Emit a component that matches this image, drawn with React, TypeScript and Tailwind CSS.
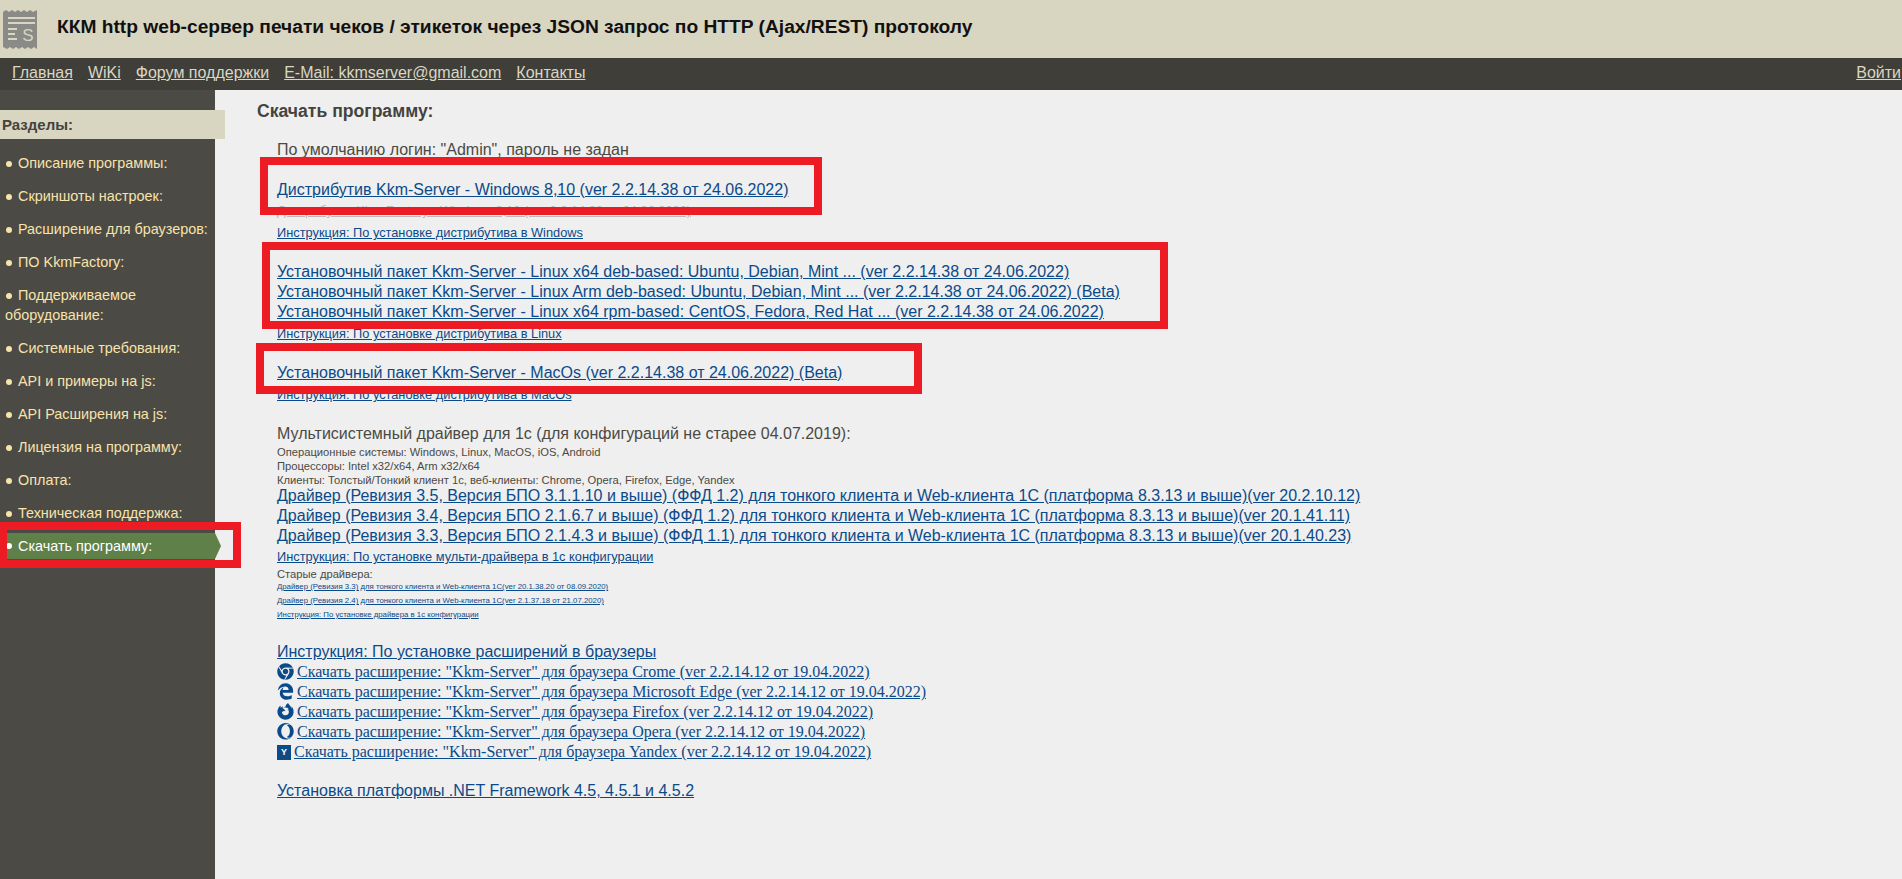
import { FaChrome, FaEdgeLegacy, FaFirefoxBrowser, FaOpera } from "react-icons/fa";

const menu = [
  "Описание программы:",
  "Скриншоты настроек:",
  "Расширение для браузеров:",
  "ПО KkmFactory:",
  "Поддерживаемое оборудование:",
  "Системные требования:",
  "API и примеры на js:",
  "API Расширения на js:",
  "Лицензия на программу:",
  "Оплата:",
  "Техническая поддержка:",
];

const navLinks = [
  "Главная",
  "WiKi",
  "Форум поддержки",
  "E-Mail: kkmserver@gmail.com",
  "Контакты",
];

const linuxLinks = [
  "Установочный пакет Kkm-Server - Linux x64 deb-based: Ubuntu, Debian, Mint ... (ver 2.2.14.38 от 24.06.2022)",
  "Установочный пакет Kkm-Server - Linux Arm deb-based: Ubuntu, Debian, Mint ... (ver 2.2.14.38 от 24.06.2022) (Beta)",
  "Установочный пакет Kkm-Server - Linux x64 rpm-based: CentOS, Fedora, Red Hat ... (ver 2.2.14.38 от 24.06.2022)",
];

const driverLinks = [
  "Драйвер (Ревизия 3.5, Версия БПО 3.1.1.10 и выше) (ФФД 1.2) для тонкого клиента и Web-клиента 1С (платформа 8.3.13 и выше)(ver 20.2.10.12)",
  "Драйвер (Ревизия 3.4, Версия БПО 2.1.6.7 и выше) (ФФД 1.2) для тонкого клиента и Web-клиента 1С (платформа 8.3.13 и выше)(ver 20.1.41.11)",
  "Драйвер (Ревизия 3.3, Версия БПО 2.1.4.3 и выше) (ФФД 1.1) для тонкого клиента и Web-клиента 1С (платформа 8.3.13 и выше)(ver 20.1.40.23)",
];

const oldDrivers = [
  "Драйвер (Ревизия 3.3) для тонкого клиента и Web-клиента 1С(ver 20.1.38.20 от 08.09.2020)",
  "Драйвер (Ревизия 2.4) для тонкого клиента и Web-клиента 1С(ver 2.1.37.18 от 21.07.2020)",
  "Инструкция: По установке драйвера в 1с конфигурации",
];

const YandexIcon = () => (
  <span className="inline-block overflow-hidden w-[14px] h-[15px] mr-[3px] align-[-3px] text-center leading-[15px] bg-[#0d4a86] text-white text-[9px] font-bold font-['Liberation_Sans',sans-serif]">
    Y
  </span>
);

const extensions = [
  { label: "Crome", icon: <FaChrome className="inline w-[17px] h-[17px] mr-[3px] align-[-3px]" /> },
  { label: "Microsoft Edge", icon: <FaEdgeLegacy className="inline w-[17px] h-[17px] mr-[3px] align-[-3px]" /> },
  { label: "Firefox", icon: <FaFirefoxBrowser className="inline w-[17px] h-[17px] mr-[3px] align-[-3px]" /> },
  { label: "Opera", icon: <FaOpera className="inline w-[17px] h-[17px] mr-[3px] align-[-3px]" /> },
  { label: "Yandex", icon: <YandexIcon /> },
];

const linkClass = "text-[#0b4a8a] underline";

const ReceiptIcon = () => (
  <svg width="34" height="39" viewBox="0 0 34 39" className="shrink-0">
    <path
      d="M0 2 L3 0 L6 2 L9 0 L12 2 L15 0 L18 2 L21 0 L24 2 L27 0 L30 2 L34 0 L34 39 L31 37 L28 39 L25 37 L22 39 L19 37 L16 39 L13 37 L10 39 L7 37 L4 39 L0 37 Z"
      fill="#8a8a86"
    />
    <path
      d="M5 8 H32 M5 13 H32 M5 19 H14 M5 24 H12 M5 29 H14"
      stroke="#d8d5c1"
      strokeWidth="2"
      fill="none"
    />
    <text
      x="25"
      y="31"
      fontSize="17"
      fontFamily="Liberation Sans, sans-serif"
      fill="#d8d5c1"
      textAnchor="middle"
    >
      S
    </text>
  </svg>
);

function Bullet({ active }: { active?: boolean }) {
  return (
    <span
      className={
        active
          ? "inline-block w-[6px] h-[6px] rounded-full bg-white ml-[1px] mr-[6px] align-[1px]"
          : "inline-block w-[6px] h-[6px] rounded-full bg-[#f7e3ac] ml-[1px] mr-[6px] align-[1px]"
      }
    />
  );
}

function RedBox({ className }: { className: string }) {
  return <div className={`absolute border-8 border-[#ed1c24] ${className}`} />;
}

export default function App() {
  return (
    <div className="relative h-screen overflow-hidden flex flex-col bg-[#efefef] font-['Liberation_Sans',Arial,sans-serif] text-[16px] text-[#4a4a44]">
      <header className="h-[58px] shrink-0 flex items-center gap-5 pl-[3px] bg-[#d8d5c1]">
        <ReceiptIcon />
        <h1 className="text-[19.2px] font-bold text-[#111] pb-[3px]">
          ККМ http web-сервер печати чеков / этикеток через JSON запрос по HTTP (Ajax/REST) протоколу
        </h1>
      </header>

      <nav className="h-8 shrink-0 flex items-center justify-between pl-3 pr-[1px] pb-[2px] bg-[#3f3e38] text-[#d9d6c4]">
        <div className="flex gap-[15px]">
          {navLinks.map((l) => (
            <a key={l} className="underline">
              {l}
            </a>
          ))}
        </div>
        <a className="underline">Войти</a>
      </nav>

      <div className="flex flex-1 min-h-0">
        <aside className="w-[215px] shrink-0 pt-5 bg-[#4c4a44] text-[14.4px] leading-5 text-[#f7e3ac]">
          <div className="w-[225px] h-[29px] pl-[2px] flex items-center font-bold text-[15px] bg-[#d8d5c1] text-[#44433d] relative">
            Разделы:
          </div>
          <ul className="mt-[14px] flex flex-col gap-[13px]">
            {menu.map((m) => (
              <li key={m} className="pl-[5px] pr-1">
                <Bullet />
                {m}
              </li>
            ))}
            <li className="relative -my-[3px] h-[26px] pl-[5px] flex items-center bg-[#5f8048] text-white">
              <Bullet active />
              Скачать программу:
              <span className="absolute left-full top-0 w-0 h-0 border-y-[13px] border-y-transparent border-l-[6px] border-l-[#5f8048]" />
            </li>
          </ul>
        </aside>

        <main className="flex-1 min-w-0 pl-[42px] pt-[11px] leading-5">
          <h2 className="font-bold text-[17.6px] text-[#44433d]">Скачать программу:</h2>
          <div className="pl-5">
            <p className="mt-[19px]">По умолчанию логин: "Admin", пароль не задан</p>
            <p className="mt-5">
              <a className={linkClass}>Дистрибутив Kkm-Server - Windows 8,10 (ver 2.2.14.38 от 24.06.2022)</a>
            </p>
            <p className="mt-1 text-[12.8px] leading-[14px]">
              <a className="text-[#b9b9b9] underline">
                Дистрибутив Kkm-Factory - Windows 8,10 (ver 2.2.14.38 от 24.06.2022)
              </a>
            </p>
            <p className="mt-[7px] text-[12.8px] leading-4">
              <a className={linkClass}>Инструкция: По установке дистрибутива в Windows</a>
            </p>

            <div className="mt-[21px]">
              {linuxLinks.map((l) => (
                <p key={l}>
                  <a className={linkClass}>{l}</a>
                </p>
              ))}
            </div>
            <p className="mt-1 text-[12.8px] leading-4">
              <a className={linkClass}>Инструкция: По установке дистрибутива в Linux</a>
            </p>

            <p className="mt-[21px]">
              <a className={linkClass}>Установочный пакет Kkm-Server - MacOs (ver 2.2.14.38 от 24.06.2022) (Beta)</a>
            </p>
            <p className="mt-1 text-[12.8px] leading-4">
              <a className={linkClass}>Инструкция: По установке дистрибутива в MacOs</a>
            </p>

            <p className="mt-[21px]">Мультисистемный драйвер для 1с (для конфигураций не старее 04.07.2019):</p>
            <div className="mt-[1px] text-[11.2px] leading-[14px]">
              <p>Операционные системы: Windows, Linux, MacOS, iOS, Android</p>
              <p>Процессоры: Intel x32/x64, Arm x32/x64</p>
              <p>Клиенты: Толстый/Тонкий клиент 1с, веб-клиенты: Chrome, Opera, Firefox, Edge, Yandex</p>
            </div>
            <div className="-mt-[1px]">
              {driverLinks.map((l) => (
                <p key={l}>
                  <a className={linkClass}>{l}</a>
                </p>
              ))}
            </div>
            <p className="mt-[3px] text-[12.8px] leading-4">
              <a className={linkClass}>Инструкция: По установке мульти-драйвера в 1с конфигурации</a>
            </p>
            <p className="mt-[2px] text-[11.2px] leading-[14px]">Старые драйвера:</p>
            <div className="-mt-[1px] text-[7.8px] leading-[14px]">
              {oldDrivers.map((l) => (
                <p key={l}>
                  <a className={linkClass}>{l}</a>
                </p>
              ))}
            </div>

            <p className="mt-5">
              <a className={linkClass}>Инструкция: По установке расширений в браузеры</a>
            </p>
            <div className="font-['Liberation_Serif',serif]">
              {extensions.map((e) => (
                <p key={e.label}>
                  <a className={linkClass}>
                    {e.icon}
                    Скачать расширение: "Kkm-Server" для браузера {e.label} (ver 2.2.14.12 от 19.04.2022)
                  </a>
                </p>
              ))}
            </div>
            <p className="mt-[19px]">
              <a className={linkClass}>Установка платформы .NET Framework 4.5, 4.5.1 и 4.5.2</a>
            </p>
          </div>
        </main>
      </div>

      {/* red highlight frames drawn on top of the page */}
      <RedBox className="left-[260px] top-[157px] w-[562px] h-[58px]" />
      <RedBox className="left-[262px] top-[242px] w-[906px] h-[87px]" />
      <RedBox className="left-[256px] top-[343px] w-[666px] h-[51px]" />
      <RedBox className="-left-px top-[522px] w-[242px] h-[46px]" />
    </div>
  );
}
